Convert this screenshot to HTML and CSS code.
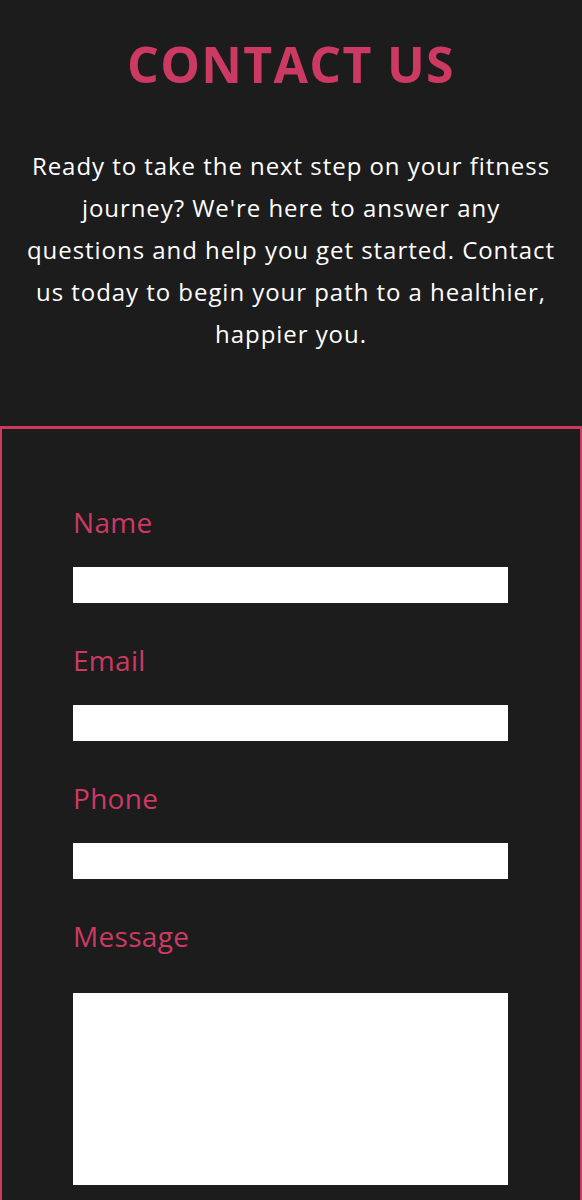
FILE: index.html
```html
<!DOCTYPE html>
<html lang="en">
<head>
<meta charset="utf-8">
<title>Contact Us</title>
<link rel="stylesheet" href="styles.css">
</head>
<body>
<section class="intro">
  <h1 class="title">CONTACT US</h1>
  <p class="lead">Ready to take the next step on your fitness journey? We're here to answer any questions and help you get started. Contact us today to begin your path to a healthier, happier you.</p>
</section>
<form class="contact">
  <div class="field">
    <label class="label" for="name">Name</label>
    <input class="input" id="name" type="text">
  </div>
  <div class="field">
    <label class="label" for="email">Email</label>
    <input class="input" id="email" type="email">
  </div>
  <div class="field">
    <label class="label" for="phone">Phone</label>
    <input class="input" id="phone" type="tel">
  </div>
  <div class="field">
    <label class="label" for="message">Message</label>
    <textarea class="input area" id="message"></textarea>
  </div>
</form>
</body>
</html>
```
FILE: styles.css
```css
html, body {
  margin: 0;
  padding: 0;
  background: #1c1c1c;
}
body {
  font-family: "Open Sans", Roboto, sans-serif;
  color: #ffffff;
}
.intro {
  padding: 34px 24px 71px;
  text-align: center;
}
.title {
  margin: 0;
  font-size: 50px;
  line-height: 60px;
  font-weight: 700;
  letter-spacing: 1.3px;
  color: #cc3a64;
}
.lead {
  margin: 51px 0 0;
  font-size: 24px;
  line-height: 42px;
  letter-spacing: 0.95px;
}
.contact {
  border: 2px solid #cc3a64;
  border-top-width: 3px;
  border-bottom: none;
  padding: 75px 72px 80px 71px;
  display: flex;
  flex-direction: column;
  gap: 39px;
}
.field {
  display: flex;
  flex-direction: column;
  gap: 27px;
}
.label {
  font-size: 28px;
  line-height: 36px;
  letter-spacing: 0.3px;
  color: #cc3a64;
}
.input {
  display: block;
  box-sizing: border-box;
  width: 100%;
  height: 36px;
  margin: 0;
  border: none;
  border-radius: 0;
  background: #ffffff;
  padding: 0 8px;
  font: inherit;
}
.area {
  height: 192px;
  margin-top: 12px;
  resize: none;
}
```
